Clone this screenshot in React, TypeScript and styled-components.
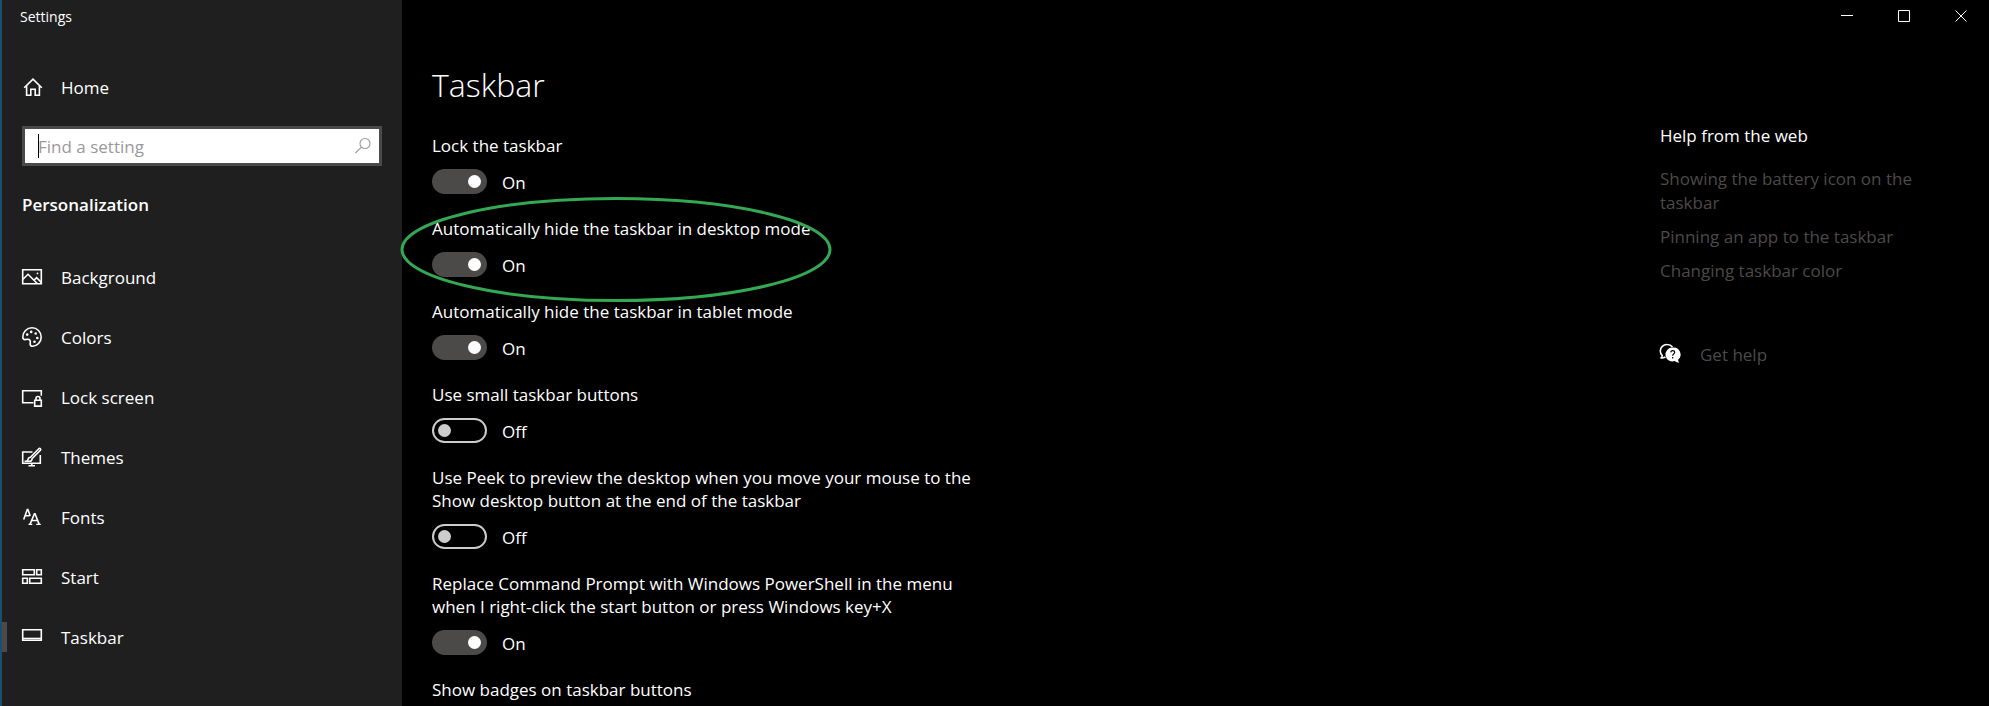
import React, { useState } from "react";
import styled, { createGlobalStyle, css } from "styled-components";

const GlobalStyle = createGlobalStyle`
  *, *::before, *::after { box-sizing: border-box; }
  body {
    margin: 0;
    background: #000;
    color: #fff;
    font-family: "Open Sans", "Noto Sans", sans-serif;
    font-size: 17px;
    line-height: 24px;
  }
  h1, h2, p, ul { margin: 0; padding: 0; font-weight: 400; }
  ul { list-style: none; }
  button, input { font: inherit; color: inherit; }
`;

const Window = styled.div`
  display: grid;
  grid-template-columns: 402px 1fr;
  min-height: 100vh;
`;

const Sidebar = styled.aside`
  display: flex;
  flex-direction: column;
  background: #1f1f1f;
  border-left: 2px solid #1c4e72;
`;

const AppTitle = styled.p`
  padding: 5px 18px 3px;
  font-size: 14px;
`;

const navRow = css`
  display: flex;
  align-items: center;
  gap: 19px;
  padding: 0 20px;
  color: #fff;
  text-decoration: none;
`;

const HomeLink = styled.a`
  ${navRow}
  height: 48px;
  margin-top: 31px;
`;

const SearchBox = styled.label`
  display: flex;
  align-items: center;
  height: 40px;
  margin: 15px 20px 0;
  padding: 0 6px 0 13px;
  border: 3px solid #4c4a48;
  background: #fff;
  color: #999;
`;

const Caret = styled.span`
  width: 1px;
  height: 24px;
  margin-right: -1px;
  background: #000;
`;

const SearchInput = styled.input`
  flex: 1;
  min-width: 0;
  padding: 2px 0 0;
  border: 0;
  outline: 0;
  background: transparent;
  color: #000;
  &::placeholder { color: #999; opacity: 1; }
`;

const SectionTitle = styled.h2`
  margin: 27px 20px 30px;
  font-size: 17px;
  font-weight: 600;
`;

const NavLink = styled.a<{ $current?: boolean }>`
  ${navRow}
  height: 60px;
  padding-left: 0;
  &::before {
    content: "";
    width: 5px;
    height: 30px;
    margin-right: -4px;
    background: ${(p) => (p.$current ? "#4c4a48" : "transparent")};
  }
`;

const NavText = styled.span`
  padding-top: 2px;
`;

const Main = styled.main`
  display: flex;
  flex-direction: column;
`;

const Caption = styled.div`
  display: flex;
  justify-content: flex-end;
`;

const CaptionButton = styled.button`
  display: grid;
  place-items: center;
  width: 57px;
  height: 32px;
  padding: 0;
  border: 0;
  background: transparent;
`;

const Content = styled.div`
  display: grid;
  grid-template-columns: 1fr 329px;
  padding-left: 30px;
`;

const PageTitle = styled.h1`
  margin: 29px 0 25px;
  font-size: 32px;
  font-weight: 300;
  line-height: 48px;
`;

const Settings = styled.div`
  display: flex;
  flex-direction: column;
  gap: 23px;
  max-width: 552px;
`;

const Setting = styled.div`
  position: relative;
  display: flex;
  flex-direction: column;
  align-items: flex-start;
  gap: 12px;
`;

const SettingLabel = styled.label`
  line-height: 23px;
`;

const ToggleRow = styled.div`
  display: flex;
  align-items: center;
  gap: 15px;
  height: 25px;
`;

const ToggleState = styled.span`
  padding-top: 2px;
`;

const Toggle = styled.input`
  appearance: none;
  display: flex;
  align-items: center;
  width: 55px;
  height: 25px;
  margin: 0;
  padding: 0 4px;
  border: 2px solid #ccc;
  border-radius: 13px;
  &::before {
    content: "";
    width: 13px;
    height: 13px;
    border-radius: 50%;
    background: #ccc;
  }
  &:checked {
    justify-content: flex-end;
    border-color: #4c4a48;
    background: #4c4a48;
  }
  &:checked::before { background: #fff; }
`;

const Highlight = styled.svg`
  position: absolute;
  top: -20px;
  left: -32px;
  width: 432px;
  height: 105px;
  pointer-events: none;
`;

const Help = styled.aside`
  display: flex;
  flex-direction: column;
  align-items: flex-start;
  padding: 92px 60px 0 0;
`;

const HelpTitle = styled.h2`
  font-size: 17px;
`;

const HelpLinks = styled.ul`
  display: flex;
  flex-direction: column;
  gap: 10px;
  margin: 19px 0 60px;
`;

const HelpLink = styled.a`
  display: flex;
  align-items: center;
  gap: 20px;
  color: #4c4a48;
  text-decoration: none;
`;

const Glyph = styled.svg`
  flex: none;
  width: 20px;
  height: 20px;
  overflow: visible;
  fill: none;
  stroke: #fff;
  stroke-width: 1.6;
`;

const icons = {
  home: (
    <path d="M2.2 10.8 11 2.2l8.800 8.600M4.600 9v9.300h4.200v-6.100h4.400v6.100h4.200V9" />
  ),
  background: (
    <>
      <path d="M.7 2.700h18.600v14.100H.7z" />
      <path d="M1 12.300 6 7.300l9 9M12 13.300l2.600-2.600 4.700 4.700" />
      <circle cx="15.500" cy="6.400" r=".9" fill="#fff" stroke="none" />
    </>
  ),
  colors: (
    <>
      <path d="M.8 10C.8 4.800 4.900.8 10 .8s9.200 4 9.200 9.200-4 9.200-8.600 9.200c-1.500 0-2.400-.7-2.400-2 0-1.500.5-2.700-.3-3.900-.9-1.400-2.500-1.200-4.100-.8C1.900 13 .8 12 .8 10Z" />
      <g fill="#fff" stroke="none">
        <circle cx="5.200" cy="7.600" r="1.300" />
        <circle cx="9.200" cy="4.900" r="1.300" />
        <circle cx="13.700" cy="6.500" r="1.300" />
        <circle cx="15.300" cy="11" r="1.300" />
        <circle cx="12.500" cy="14.800" r="1.300" />
      </g>
    </>
  ),
  lock: (
    <>
      <path d="M11.500 15.800H.7V3.700h18.600v5" />
      <path d="M12.700 13.200h6.600v5.900h-6.600zM14 13v-1.500a2 2 0 0 1 4 0V13" />
    </>
  ),
  themes: (
    <>
      <path d="M10.500 5H.7v11.300h17.600V8M6.500 18.700h6.500M9.800 16.300v2.400" />
      <path d="M2.500 14.300h5c1.700 0 2.600-1 2.500-2.500L18.400 3.300c.5-.6.400-1.200 0-1.600s-1.100-.4-1.600.1L8.500 10.300c-1.500.1-2.300 1-2.500 2.300-.1.800-1 1.500-2 1.700" />
    </>
  ),
  fonts: (
    <>
      <path d="M1.700 12.500 5.300 2.500h.6L8.200 9M3 8.700h4.600" />
      <path d="M8 17.400 12.400 6.800h.6l4.200 10.600M9.500 13.500h6" />
      <path d="M6.500 17.400h3.800M14.200 17.400h4.600" strokeWidth="1.200" />
    </>
  ),
  start: (
    <path d="M.7 2.700h11.600v5H.7zM14.700 2.700h4.600v5h-4.600zM.7 11.300h4.600v5H.7zM7.700 11.300h11.600v5H7.700z" />
  ),
  taskbar: (
    <>
      <path d="M.7 2.700h18.600v10.600H.7z" />
      <path d="M1 11.500h18" />
    </>
  ),
  help: (
    <g transform="translate(-.5 -1.500)">
      <path d="M1 14.500c1.200-.5 1.800-1.300 1.800-2.300C1.300 10.800.8 9.300.8 7.500A6.500 6.500 0 0 1 7.500 1c2.500 0 4.300 1 5.500 2.500M1 14.500c2 .2 3.600-.2 5-1" />
      <path d="M13 4a7 7 0 1 0 2.300 13.600c1.300 1.100 2.700 1.600 4.500 1.600-.8-.8-1.200-1.900-1.200-3A7 7 0 0 0 13 4Z" fill="#fff" stroke="none" />
      <path d="M11.200 8.800c.2-1.200 1-1.700 2-1.700 1.200 0 2 .7 2 1.700 0 1.600-2 1.600-2 3.400M13.200 13.500v1.500" stroke="#000" strokeWidth="1.200" />
    </g>
  ),
  search: (
    <>
      <circle cx="12" cy="7.500" r="5" />
      <path d="M8.400 11.100 2.500 17" />
    </>
  ),
};

type IconName = keyof typeof icons;

const Icon = ({ name }: { name: IconName }) => (
  <Glyph viewBox="0 0 20 20" aria-hidden="true">
    {icons[name]}
  </Glyph>
);

const SearchGlyph = styled(Glyph)`
  stroke: #999;
  stroke-width: 1.1;
`;

const CaptionGlyph = styled.svg`
  width: 12px;
  height: 12px;
  fill: none;
  stroke: #fff;
`;

const navItems: { icon: IconName; label: string; current?: boolean }[] = [
  { icon: "background", label: "Background" },
  { icon: "colors", label: "Colors" },
  { icon: "lock", label: "Lock screen" },
  { icon: "themes", label: "Themes" },
  { icon: "fonts", label: "Fonts" },
  { icon: "start", label: "Start" },
  { icon: "taskbar", label: "Taskbar", current: true },
];

const captionButtons = [
  { label: "Minimize", path: "M0 5.5h12" },
  { label: "Maximize", path: "M.5.5h11v11H.5z" },
  { label: "Close", path: "M.5.5l11 11M11.500.5l-11 11" },
];

const settings = [
  { id: "lock-taskbar", label: "Lock the taskbar", on: true },
  { id: "hide-desktop", label: "Automatically hide the taskbar in desktop mode", on: true, highlighted: true },
  { id: "hide-tablet", label: "Automatically hide the taskbar in tablet mode", on: true },
  { id: "small", label: "Use small taskbar buttons", on: false },
  { id: "peek", label: "Use Peek to preview the desktop when you move your mouse to the Show desktop button at the end of the taskbar", on: false },
  { id: "powershell", label: "Replace Command Prompt with Windows PowerShell in the menu when I right-click the start button or press Windows key+X", on: true },
];

const helpLinks = [
  "Showing the battery icon on the taskbar",
  "Pinning an app to the taskbar",
  "Changing taskbar color",
];

function ToggleSetting({ id, label, on, highlighted }: { id: string; label: string; on: boolean; highlighted?: boolean }) {
  const [checked, setChecked] = useState(on);
  return (
    <Setting>
      <SettingLabel htmlFor={id}>{label}</SettingLabel>
      <ToggleRow>
        <Toggle
          id={id}
          type="checkbox"
          role="switch"
          checked={checked}
          onChange={(e) => setChecked(e.target.checked)}
        />
        <ToggleState>{checked ? "On" : "Off"}</ToggleState>
      </ToggleRow>
      {highlighted && (
        <Highlight viewBox="0 0 432 105" aria-hidden="true">
          <ellipse cx="216" cy="52.500" rx="214" ry="51" fill="none" stroke="#34a853" strokeWidth="3" />
        </Highlight>
      )}
    </Setting>
  );
}

export default function App() {
  return (
    <>
      <GlobalStyle />
      <Window>
        <Sidebar>
          <AppTitle>Settings</AppTitle>
          <HomeLink href="#home">
            <Icon name="home" />
            <NavText>Home</NavText>
          </HomeLink>
          <SearchBox>
            <Caret />
            <SearchInput type="text" placeholder="Find a setting" aria-label="Find a setting" />
            <SearchGlyph viewBox="0 0 20 20" aria-hidden="true">{icons.search}</SearchGlyph>
          </SearchBox>
          <SectionTitle>Personalization</SectionTitle>
          <nav>
            {navItems.map((item) => (
              <NavLink
                key={item.label}
                href={`#${item.icon}`}
                $current={item.current}
                aria-current={item.current ? "page" : undefined}
              >
                <Icon name={item.icon} />
                <NavText>{item.label}</NavText>
              </NavLink>
            ))}
          </nav>
        </Sidebar>
        <Main>
          <Caption>
            {captionButtons.map((b) => (
              <CaptionButton key={b.label} type="button" aria-label={b.label}>
                <CaptionGlyph viewBox="0 0 12 12" aria-hidden="true">
                  <path d={b.path} />
                </CaptionGlyph>
              </CaptionButton>
            ))}
          </Caption>
          <Content>
            <section>
              <PageTitle>Taskbar</PageTitle>
              <Settings>
                {settings.map((s) => (
                  <ToggleSetting key={s.id} {...s} />
                ))}
                <Setting as="p">Show badges on taskbar buttons</Setting>
              </Settings>
            </section>
            <Help>
              <HelpTitle>Help from the web</HelpTitle>
              <HelpLinks>
                {helpLinks.map((text) => (
                  <li key={text}>
                    <HelpLink href="#help">{text}</HelpLink>
                  </li>
                ))}
              </HelpLinks>
              <HelpLink href="#get-help">
                <Icon name="help" />
                Get help
              </HelpLink>
            </Help>
          </Content>
        </Main>
      </Window>
    </>
  );
}
